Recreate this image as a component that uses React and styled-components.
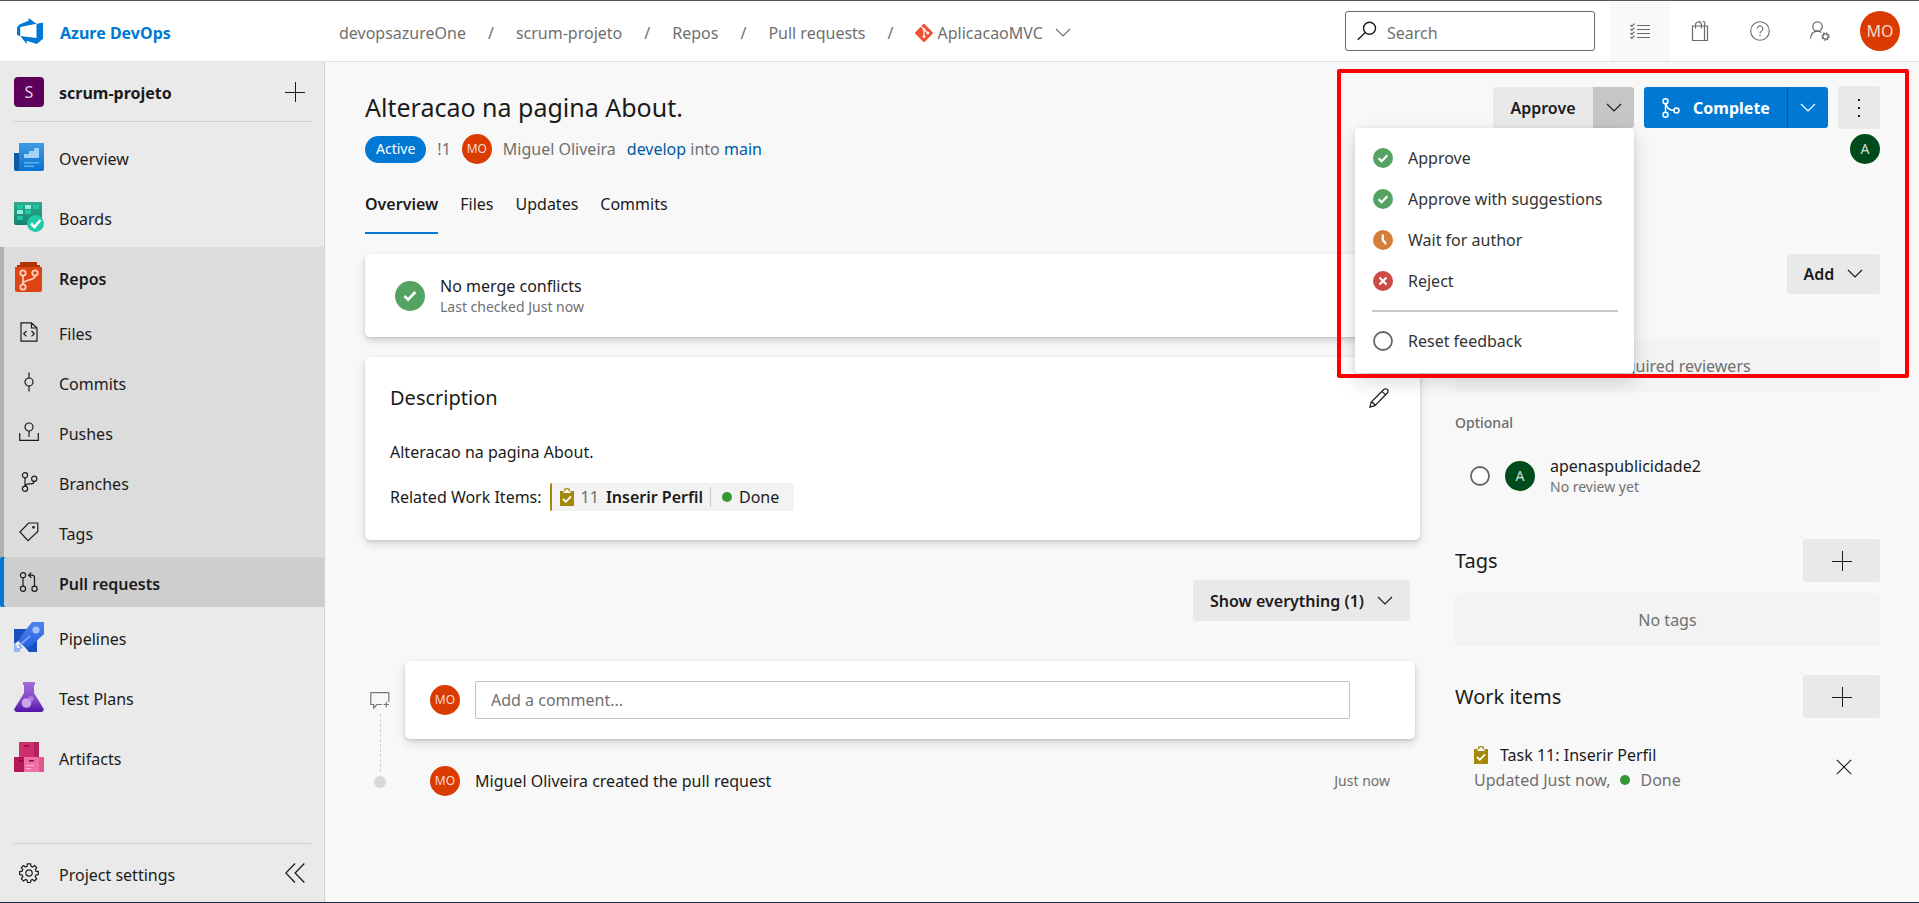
import React from "react";
import styled, { createGlobalStyle, css } from "styled-components";
import { SiGit } from "react-icons/si";

const GlobalStyle = createGlobalStyle`
  *, *::before, *::after { box-sizing: border-box; }
  body { margin: 0; background: #f8f8f8; }
  body, button, input {
    font-family: "Noto Sans", "Open Sans", sans-serif;
    font-size: 16px;
    line-height: 22px;
    color: #1b1b1b;
  }
  button { border: 0; padding: 0; background: none; cursor: pointer; }
  a { color: inherit; text-decoration: none; }
  h1, h2, p, ul { margin: 0; padding: 0; font-weight: 400; }
  ul { list-style: none; }
  svg { display: block; flex: none; }
`;

/* ---------- icons ---------- */

const Line = ({ size = 20, children, width = 1.2, color = "currentColor" }) => (
  <svg width={size} height={size} viewBox="0 0 20 20" fill="none" stroke={color} strokeWidth={width} aria-hidden="true">
    {children}
  </svg>
);

const Chevron = ({ color = "currentColor" }) => (
  <svg width="16" height="16" viewBox="0 0 16 16" fill="none" stroke={color} strokeWidth="1.2" aria-hidden="true">
    <path d="M1 4l7 7 7-7" />
  </svg>
);
const PlusIcon = () => (
  <Line width={1}><path d="M0 10.500h20M10.500 0v20" /></Line>
);
const CloseIcon = () => (
  <svg width="16" height="16" viewBox="0 0 16 16" fill="none" stroke="currentColor" strokeWidth="1.1" aria-hidden="true">
    <path d="M.8.8l14.400 14.400M15.200.8L.8 15.200" />
  </svg>
);
const SearchIcon = () => (
  <Line width={1.4}><circle cx="12.500" cy="7.200" r="6" /><path d="M8.200 11.500L.8 18.800" /></Line>
);
const ListIcon = () => (
  <Line width={1.2}>
    <path d="M7 4.500h13M7 8.500h13M7 12.500h13M7 16.500h13" />
    <path d="M.5 4l1.300 1.300L4.500 2.600M.5 8l1.300 1.300L4.500 6.600M.5 12l1.300 1.300 2.700-2.700M.5 16l1.300 1.300 2.700-2.700" />
  </Line>
);
const BagIcon = () => (
  <Line width={1.2}>
    <path d="M2.500 5h12v14.500h-12zM14.500 5h3v14.500h-3M5.500 7.500V4a3 3 0 0 1 6 0v3.500M9 1.300A3 3 0 0 1 14.500 4v3.500" />
  </Line>
);
const HelpIcon = () => (
  <Line width={1.1}>
    <circle cx="10" cy="10" r="9.300" />
    <path d="M7.200 7.800a2.800 2.800 0 1 1 4.300 2.300c-1 .7-1.500 1.200-1.500 2.400" />
    <path d="M10 13.800v1.500" />
  </Line>
);
const UserGearIcon = () => (
  <Line width={1.2}>
    <circle cx="7.500" cy="5.500" r="4.700" />
    <path d="M.6 17.500c.3-4.500 3-7.300 6.900-7.300 1.500 0 2.800.5 3.800 1.300" />
    <circle cx="15.500" cy="15.500" r="2.600" />
    <circle cx="15.500" cy="15.500" r="3.600" strokeDasharray="1.400 1.430" strokeWidth="1.400" />
  </Line>
);
const FilesIcon = () => (
  <Line><path d="M2 .8h10.500L18 6v13.200H2zM12.500.8V6H18M7.500 9l-2.800 2.700 2.800 2.700M12.500 9l2.800 2.700-2.800 2.700" /></Line>
);
const CommitIcon = () => (
  <Line><circle cx="10" cy="10" r="4" /><path d="M10 .5V6M10 14v5.500" /></Line>
);
const PushIcon = () => (
  <Line><circle cx="10" cy="5" r="4" /><path d="M10 9v6M.7 11v7.300h18.600V11" /></Line>
);
const BranchIcon = () => (
  <Line>
    <circle cx="6" cy="3.200" r="2.600" /><circle cx="6" cy="16.800" r="2.600" /><circle cx="15.200" cy="6.800" r="2.600" />
    <path d="M6 5.800v8.400M6.500 14c.3-1.800 1.300-2.200 3.500-2.200h2c2 0 3-.8 3.200-2.400" />
  </Line>
);
const TagIcon = () => (
  <Line><path d="M9.600 1h9.200v8.500L9 18.600.9 10z" /><circle cx="14.500" cy="5.300" r=".8" fill="currentColor" /></Line>
);
const PullIcon = () => (
  <Line>
    <circle cx="4" cy="3.200" r="2.600" /><circle cx="4" cy="16.800" r="2.600" /><circle cx="15.500" cy="16.800" r="2.600" />
    <path d="M4 5.800v8.400M15.500 14.200V6c0-1.800-.8-2.800-2.500-2.800H9.800M12.300.6L9.600 3.200l2.700 2.600" />
  </Line>
);
const GearIcon = () => (
  <Line>
    <circle cx="10" cy="10" r="3.200" />
    <path d="M8.400.8h3.200l.4 2.500 1.600.7 2.100-1.500 2 2-1.400 2.100.6 1.600 2.400.4v3l-2.400.5-.7 1.500 1.500 2.200-2.200 2.100-2.100-1.400-1.500.6-.5 2.600H8.600l-.5-2.600-1.500-.6-2.200 1.400-2.100-2.100 1.500-2.200-.6-1.500-2.500-.5v-3l2.500-.4.6-1.600-1.500-2.100 2.200-2L6.500 4l1.500-.7z" />
  </Line>
);
const CollapseIcon = () => (
  <Line width={1.300}><path d="M10 .5L.8 10l9.200 9.500M19.300.5L10.100 10l9.200 9.500" /></Line>
);
const PencilIcon = () => (
  <Line>
    <path d="M.9 19.100l1.300-5L14.800 1.500c1-1 2.600-1 3.500 0s1 2.400 0 3.500L5.900 17.700zM13 3.300l3.600 3.600M2.200 14.100c1.800.2 3.300 1.500 3.700 3.600" />
  </Line>
);
const MergeIcon = () => (
  <Line width={1.500}>
    <circle cx="4.500" cy="3.300" r="2.500" /><circle cx="4.500" cy="16.700" r="2.500" /><circle cx="15.500" cy="12.500" r="2.500" />
    <path d="M4.500 5.800v8.400M5 6c.7 4 3.500 6.300 8 6.500" />
  </Line>
);
const MoreIcon = () => (
  <svg width="20" height="20" viewBox="0 0 20 20" fill="#222" aria-hidden="true">
    <rect x="9" y="1" width="2" height="2" /><rect x="9" y="9" width="2" height="2" /><rect x="9" y="17" width="2" height="2" />
  </svg>
);
const CommentIcon = () => (
  <Line color="#777">
    <path d="M12 13.500H7l-3.300 3.500v-3.500H.8V1.600h18v9.500M16.300 10.800v5.500M13.500 13.500H19" />
  </Line>
);
const RingIcon = () => (
  <svg width="20" height="20" viewBox="0 0 20 20" aria-hidden="true">
    <circle cx="10" cy="10" r="9" fill="#fff" stroke="#666" strokeWidth="1.800" />
  </svg>
);
const StatusIcon = ({ kind, size = 20 }) => {
  const fills = { ok: "#55a362", wait: "#d67f3c", no: "#cd4a45" };
  return (
    <svg width={size} height={size} viewBox="0 0 20 20" fill="none" stroke="#fff" strokeWidth="2.200" aria-hidden="true">
      <circle cx="10" cy="10" r="10" fill={fills[kind]} stroke="none" />
      {kind === "ok" && <path d="M5.600 10.200l3 3 5.800-6" />}
      {kind === "wait" && <path d="M9.800 4.500V10l3.200 4" />}
      {kind === "no" && <path d="M6.500 6.500l7 7M13.500 6.500l-7 7" />}
    </svg>
  );
};
const LargeCheckIcon = () => (
  <svg width="30" height="30" viewBox="0 0 30 30" fill="none" aria-hidden="true">
    <circle cx="15" cy="15" r="15" fill="#55a362" />
    <path d="M9.500 15l3.600 3.600 7.200-7.600" stroke="#fff" strokeWidth="2.600" />
  </svg>
);
const TaskIcon = () => (
  <svg width="14" height="18" viewBox="0 0 14 18" aria-hidden="true">
    <path d="M0 3h4V2a3 2 0 0 1 6 0v1h4v15H0z" fill="#a4880a" />
    <path d="M3.500 3.200h2V2.300a1.500 1 0 0 1 3 0v.9h2V5h-7z" fill="#fff" />
    <path d="M3 11l2.800 2.800L11 8.300" fill="none" stroke="#fff" strokeWidth="1.800" />
  </svg>
);
const AzureLogo = () => (
  <svg width="26" height="26" viewBox="0 0 24 24" fill="#0078d4" aria-hidden="true">
    <path d="M0 8.877L2.247 5.910l8.405-3.416V.022l7.370 5.393L2.966 8.338v8.225L0 15.707zm24-4.450v14.651l-5.753 4.900-9.303-3.057v3.056l-5.978-7.416 15.057 1.798V5.415z" />
  </svg>
);

const OverviewArt = () => (
  <svg width="30" height="30" viewBox="0 0 30 30" aria-hidden="true">
    <defs><linearGradient id="ov" x1="0" y1="0" x2="0" y2="1"><stop offset="0" stopColor="#419be2" /><stop offset="1" stopColor="#0573d2" /></linearGradient></defs>
    <path d="M0 11h7v18H2a2 2 0 0 1-2-2z" fill="#0c59a4" />
    <path d="M5 1h24a1 1 0 0 1 1 1v25a2 2 0 0 1-2 2H3c1.500 0 2-1 2-2z" fill="url(#ov)" />
    <path d="M10 12h5V9h5V6h5v10H10z" fill="#a7d2f7" />
    <path d="M10 20h15v1.500H10zM10 23.500h10V25H10z" fill="#5eb0ef" />
  </svg>
);
const BoardsArt = () => (
  <svg width="30" height="30" viewBox="0 0 30 30" aria-hidden="true">
    <defs><linearGradient id="bo" x1="0" y1="0" x2="0" y2="1"><stop offset="0" stopColor="#33a890" /><stop offset="1" stopColor="#16826c" /></linearGradient></defs>
    <path d="M0 0h28v23H2a2 2 0 0 1-2-2z" fill="url(#bo)" />
    <g fill="#19c9a3"><rect x="3" y="3" width="6" height="4" /><rect x="19" y="3" width="6" height="4" /><rect x="11" y="8" width="6" height="4" /><rect x="3" y="14" width="6" height="4" /></g>
    <rect x="11" y="3" width="6" height="4" fill="#8ff0dc" /><rect x="3" y="8" width="6" height="4" fill="#8ff0dc" />
    <circle cx="21.500" cy="21.500" r="8.500" fill="#1fcaa9" />
    <path d="M17 21.500l3.500 3.500 6-7" fill="none" stroke="#fff" strokeWidth="2.600" />
  </svg>
);
const ReposArt = () => (
  <svg width="30" height="30" viewBox="0 0 30 30" aria-hidden="true">
    <path d="M6 0h17v3h3v4H3V3h3z" fill="#b33403" />
    <path d="M1 5h27v23a2 2 0 0 1-2 2H3a2 2 0 0 1-2-2z" fill="#dd4614" />
    <g fill="none" stroke="#ffcdbd" strokeWidth="1.800"><circle cx="9" cy="11" r="2.700" /><circle cx="21" cy="11" r="2.700" /><circle cx="9" cy="25" r="2.700" /><path d="M9 14v8M21 14c0 5-12 3-12 8" /></g>
  </svg>
);
const PipelinesArt = () => (
  <svg width="30" height="30" viewBox="0 0 30 30" aria-hidden="true">
    <defs><linearGradient id="pi" x1="0" y1="0" x2="0" y2="1"><stop offset="0" stopColor="#5082ee" /><stop offset="1" stopColor="#2261e0" /></linearGradient></defs>
    <path d="M0 7h14L6 18l-6 4zM23 15v15h-8l-5-6z" fill="#1a4dbf" />
    <path d="M18 0h12v12L16 25l-4 1-7-6 1-5z" fill="url(#pi)" />
    <circle cx="22" cy="8" r="3.600" fill="#a5bff9" />
    <path d="M16 14l-9 8" stroke="#7ba2f5" strokeWidth="2" />
    <path d="M0 21h2v3l4-2 3 4-3 1v3H0z" fill="#93b4f6" /><path d="M3 22l3 4h-3z" fill="#fff" />
  </svg>
);
const TestArt = () => (
  <svg width="30" height="30" viewBox="0 0 30 30" aria-hidden="true">
    <defs><linearGradient id="te" x1="0" y1="0" x2="0" y2="1"><stop offset="0" stopColor="#a56cda" /><stop offset=".6" stopColor="#7f48c4" /><stop offset="1" stopColor="#5413a8" /></linearGradient></defs>
    <path d="M9 0h12v3h-1v8l9.500 15.500A2.500 2.500 0 0 1 27.500 30h-25A2.500 2.500 0 0 1 .5 26.500L10 11V3H9z" fill="url(#te)" />
    <circle cx="12.500" cy="21" r="4.800" fill="#cba5ee" /><circle cx="17" cy="16.800" r="2.800" fill="#b88ae4" opacity=".8" />
  </svg>
);
const ArtifactsArt = () => (
  <svg width="30" height="30" viewBox="0 0 30 30" aria-hidden="true">
    <path d="M5 0h20v15H5z" fill="#cc2f6d" /><path d="M20 0h5v15h-5z" fill="#b5235d" />
    <path d="M0 15h10v15H1a1 1 0 0 1-1-1z" fill="#b2175a" /><path d="M10 15h20v14a1 1 0 0 1-1 1H10z" fill="#ee6fa4" /><path d="M25 15h5v14a1 1 0 0 1-1 1h-4z" fill="#e4548f" />
    <path d="M10 3h5v1.500h-5zM5 18h4v1.500H5zM15 18h5v1.500h-5z" fill="#8c0c40" /><path d="M12 23h8v1h-8zM12 26h5v1h-5z" fill="#ffb3d1" />
  </svg>
);

/* ---------- shell ---------- */

const Page = styled.div`
  min-height: 100vh;
  display: flex;
  flex-direction: column;
  border-top: 1px solid #555;
  border-bottom: 1px solid #1c2c40;
`;
const Header = styled.header`
  display: flex;
  align-items: center;
  height: 61px;
  background: #fff;
  border-bottom: 1px solid #e2e2e2;
  padding-right: 19px;
`;
const Label = styled.span`
  padding-top: 3px;
`;
const Brand = styled.a`
  display: flex;
  align-items: center;
  gap: 17px;
  width: 339px;
  padding-left: 17px;
  color: #0078d4;
  font-weight: 700;
`;
const Crumbs = styled.nav`
  display: flex;
  align-items: center;
  gap: 22px;
  flex: 1;
  padding-top: 3px;
  color: #707070;
  white-space: nowrap;
`;
const RepoPicker = styled.button`
  display: flex;
  align-items: center;
  gap: 4px;
  color: #707070;
  svg:last-child { margin-left: 8px; }
`;
const SearchBox = styled.label`
  display: flex;
  align-items: center;
  gap: 10px;
  width: 250px;
  height: 40px;
  margin-right: 15px;
  padding: 0 11px;
  border: 1px solid #666;
  border-radius: 3px;
  input {
    width: 100%;
    border: 0;
    padding: 3px 0 0;
    outline: 0;
    background: none;
  }
  input::placeholder { color: #707070; opacity: 1; }
`;
const HeaderButton = styled.button`
  display: flex;
  align-items: center;
  justify-content: center;
  width: 60px;
  height: 60px;
  color: #6a6a6a;
  background: ${(p) => (p.$active ? "#f9f9f9" : "transparent")};
`;
const Avatar = styled.span`
  display: flex;
  align-items: center;
  justify-content: center;
  flex: none;
  width: ${(p) => p.$size || 30}px;
  height: ${(p) => p.$size || 30}px;
  border-radius: 50%;
  background: ${(p) => (p.$green ? "#004b1c" : "#da3b01")};
  color: ${(p) => (p.$green ? "#d0e0d5" : "#f6d9cf")};
  font-size: ${(p) => p.$font || 12}px;
`;
const ProfileButton = styled.button`
  margin-left: 10px;
`;
const Body = styled.div`
  display: flex;
  flex: 1;
`;

/* ---------- sidebar ---------- */

const Sidebar = styled.aside`
  display: flex;
  flex-direction: column;
  flex: none;
  width: 325px;
  background: #eaeaea;
  border-right: 1px solid #d0d0d0;
`;
const ProjectRow = styled.div`
  display: flex;
  align-items: center;
  gap: 15px;
  height: 60px;
  margin: 0 13px 5px;
  padding: 0 6px 0 1px;
  border-bottom: 1px solid #cfcfcf;
  font-weight: 700;
  a { flex: 1; padding-top: 3px; }
`;
const ProjectBadge = styled.span`
  display: grid;
  place-items: center;
  width: 30px;
  height: 30px;
  border-radius: 4px;
  background: #5c005c;
  color: #e6cfe6;
  font-weight: 400;
`;
const NavGroup = styled.ul`
  ${(p) => p.$open && css`
    background: #dcdcdc;
    box-shadow: inset 4px 0 0 #b0b0b0;
  `}
`;
const NavLink = styled.a`
  display: flex;
  align-items: center;
  height: ${(p) => (p.$sub ? 50 : 60)}px;
  font-weight: ${(p) => (p.$strong ? 600 : 400)};
  ${(p) => p.$current && css`
    background: #cecece;
    box-shadow: inset 4px 0 0 #0078d4;
    border-radius: 2px;
  `}
`;
const NavIcon = styled.span`
  display: flex;
  justify-content: center;
  width: 59px;
  padding-right: 1px;
`;
const SidebarFooter = styled.div`
  display: flex;
  align-items: center;
  height: 59px;
  margin: auto 13px 0;
  border-top: 1px solid #cfcfcf;
  padding-right: 6px;
  a {
    display: flex;
    flex: 1;
    align-items: center;
    gap: 20px;
    padding-left: 6px;
  }
`;

/* ---------- main ---------- */

const Main = styled.main`
  position: relative;
  flex: 1;
  min-width: 0;
  padding: 24px 39px 0 40px;
`;
const Top = styled.div`
  display: flex;
  justify-content: space-between;
`;
const TitleBlock = styled.div`
  display: flex;
  flex-direction: column;
  gap: 5px;
`;
const Title = styled.h1`
  font-size: 25px;
  line-height: 43px;
`;
const Meta = styled.div`
  display: flex;
  align-items: center;
  gap: 11px;
  height: 30px;
  color: #707070;
`;
const Pill = styled.span`
  padding: 2px 11px 3px;
  border-radius: 14px;
  background: #0078d4;
  color: #fff;
  font-size: 14px;
`;
const BranchLink = styled.a`
  color: #005a9e;
`;
const Actions = styled.div`
  display: flex;
  flex-direction: column;
  align-items: flex-end;
  gap: 5px;
`;
const ActionRow = styled.div`
  display: flex;
  align-items: center;
  gap: 10px;
`;
const Split = styled.div`
  position: relative;
  display: flex;
  height: 41px;
`;
const SplitMain = styled.button`
  display: flex;
  align-items: center;
  justify-content: center;
  gap: 12px;
  width: ${(p) => (p.$primary ? 143 : 100)}px;
  border-radius: 3px 0 0 3px;
  font-weight: ${(p) => (p.$primary ? 700 : 600)};
  background: ${(p) => (p.$primary ? "#0078d4" : "#e9e9e9")};
  color: ${(p) => (p.$primary ? "#fff" : "inherit")};
`;
const SplitToggle = styled.button`
  display: flex;
  align-items: center;
  justify-content: center;
  width: 41px;
  border-radius: 0 3px 3px 0;
  background: ${(p) => (p.$primary ? "#0078d4" : "#c6c6c6")};
  border-left: ${(p) => (p.$primary ? "1px solid #005a9e" : "0")};
  color: ${(p) => (p.$primary ? "#fff" : "inherit")};
`;
const GreyButton = styled.button`
  display: flex;
  align-items: center;
  justify-content: center;
  gap: 13px;
  width: ${(p) => p.$w}px;
  height: ${(p) => p.$h}px;
  border-radius: 3px;
  background: #e9e9e9;
  font-weight: 600;
  white-space: nowrap;
`;
const Menu = styled.div`
  position: absolute;
  z-index: 2;
  top: 100%;
  right: 0;
  width: 279px;
  padding: 9px 0 12px;
  background: #fff;
  border-radius: 4px;
  box-shadow: 0 8px 20px rgba(0, 0, 0, 0.16), 0 1px 4px rgba(0, 0, 0, 0.1);
`;
const MenuItem = styled.button`
  display: flex;
  align-items: center;
  gap: 15px;
  width: 100%;
  height: 41px;
  padding-left: 18px;
  color: #333;
  white-space: nowrap;
`;
const MenuRule = styled.div`
  height: 2px;
  margin: 9px 16px 8px 17px;
  background: #c8c8c8;
`;
const Highlight = styled.div`
  position: absolute;
  z-index: 3;
  top: 7px;
  right: 10px;
  width: 572px;
  height: 309px;
  border: 4px solid #f00;
  border-radius: 2px;
  pointer-events: none;
`;
const Tabs = styled.nav`
  display: flex;
  gap: 22px;
  margin-top: 12px;
`;
const Tab = styled.a`
  padding: 17px 0;
  line-height: 22px;
  font-weight: ${(p) => (p.$on ? 600 : 400)};
  border-bottom: 2px solid ${(p) => (p.$on ? "#0078d4" : "transparent")};
`;
const Columns = styled.div`
  display: grid;
  grid-template-columns: minmax(0, 1fr) 425px;
  gap: 35px;
  margin-top: 20px;
`;
const Left = styled.div`
  display: flex;
  flex-direction: column;
`;
const cardLook = css`
  background: #fff;
  border-radius: 5px;
  box-shadow: 0 4px 9px rgba(0, 0, 0, 0.14), 0 1px 3px rgba(0, 0, 0, 0.12);
`;
const MergeCard = styled.section`
  ${cardLook}
  display: flex;
  align-items: center;
  gap: 15px;
  height: 83px;
  padding: 0 30px;
`;
const Muted = styled.span`
  color: #707070;
  font-size: ${(p) => (p.$small ? 14 : 16)}px;
  line-height: ${(p) => (p.$small ? 20 : 22)}px;
`;
const Stack = styled.div`
  display: flex;
  flex-direction: column;
`;
const DescriptionCard = styled.section`
  ${cardLook}
  margin-top: 20px;
  height: 183px;
  padding: 26px 25px 0;
`;
const CardHead = styled.div`
  display: flex;
  align-items: center;
  justify-content: space-between;
  height: 30px;
  padding-right: 6px;
`;
const Heading = styled.h2`
  font-size: 20px;
  line-height: 26px;
`;
const DescText = styled.p`
  margin: 28px 0 20px;
`;
const Related = styled.div`
  display: flex;
  align-items: center;
  gap: 8px;
`;
const Chip = styled.a`
  display: flex;
  align-items: center;
  gap: 7px;
  height: 28px;
  padding: 0 15px 0 8px;
  border-left: 2px solid #a4880a;
  border-radius: 2px;
  background: #f3f3f3;
  b { font-weight: 600; }
`;
const ChipState = styled.span`
  display: flex;
  align-items: center;
  gap: 7px;
  height: 20px;
  padding-left: 11px;
  border-left: 1px solid #c8c8c8;
`;
const Dot = styled.i`
  width: 10px;
  height: 10px;
  border-radius: 50%;
  background: #339933;
`;
const FilterRow = styled.div`
  display: flex;
  justify-content: flex-end;
  margin: 40px 10px 40px 0;
`;
const Timeline = styled.div`
  display: grid;
  grid-template-columns: 30px minmax(0, 1fr);
  column-gap: 10px;
  padding-right: 5px;
`;
const Rail = styled.div`
  display: flex;
  flex-direction: column;
  align-items: center;
  padding-top: 30px;
`;
const RailLine = styled.span`
  height: 58px;
  margin: 3px 0 4px;
  border-left: 1px dashed #cfcfcf;
`;
const RailDot = styled.span`
  width: 12px;
  height: 12px;
  border-radius: 50%;
  background: #d9d9d9;
`;
const CommentCard = styled.form`
  ${cardLook}
  display: flex;
  align-items: center;
  gap: 15px;
  height: 78px;
  padding: 0 65px 0 25px;
`;
const CommentInput = styled.input`
  flex: 1;
  height: 38px;
  padding: 0 15px;
  border: 1px solid #c2c2c2;
  border-radius: 2px;
  &::placeholder { color: #707070; opacity: 1; }
`;
const EventRow = styled.div`
  display: flex;
  align-items: center;
  gap: 15px;
  margin-top: 27px;
  padding: 0 25px;
  p { flex: 1; }
`;
const Right = styled.div`
  display: flex;
  flex-direction: column;
`;
const SideHead = styled.div`
  display: flex;
  align-items: center;
  justify-content: ${(p) => (p.$end ? "flex-end" : "space-between")};
`;
const Empty = styled.div`
  display: grid;
  place-items: center;
  height: 53px;
  margin: ${(p) => p.$top}px 0 ${(p) => p.$bottom}px;
  border-radius: 3px;
  background: #f3f3f3;
  color: #707070;
`;
const SubHead = styled.div`
  color: #6a6a6a;
  font-size: 14px;
  font-weight: 500;
  line-height: 20px;
`;
const Reviewer = styled.div`
  display: flex;
  align-items: center;
  gap: 15px;
  height: 50px;
  margin: 18px 0 38px;
  padding-left: 15px;
`;
const WorkItem = styled.div`
  display: flex;
  align-items: center;
  justify-content: space-between;
  margin-top: 24px;
  padding: 0 28px 0 19px;
`;
const WorkLine = styled.div`
  display: flex;
  align-items: center;
  gap: ${(p) => p.$gap}px;
  height: 25px;
  color: ${(p) => (p.$muted ? "#707070" : "inherit")};
`;

const subPages = [
  ["Files", FilesIcon],
  ["Commits", CommitIcon],
  ["Pushes", PushIcon],
  ["Branches", BranchIcon],
  ["Tags", TagIcon],
  ["Pull requests", PullIcon],
];
const votes = [
  ["Approve", "ok"],
  ["Approve with suggestions", "ok"],
  ["Wait for author", "wait"],
  ["Reject", "no"],
];

const NavItem = ({ label, icon: Icon, ...rest }) => (
  <li>
    <NavLink href="#" {...rest}>
      <NavIcon><Icon /></NavIcon>
      <Label>{label}</Label>
    </NavLink>
  </li>
);

export default function App() {
  return (
    <Page>
      <GlobalStyle />
      <Header>
        <Brand href="#"><AzureLogo /><Label>Azure DevOps</Label></Brand>
        <Crumbs aria-label="Breadcrumb">
          <a href="#">devopsazureOne</a><span>/</span>
          <a href="#">scrum-projeto</a><span>/</span>
          <a href="#">Repos</a><span>/</span>
          <a href="#">Pull requests</a><span>/</span>
          <RepoPicker type="button"><SiGit size={18} color="#f05133" />AplicacaoMVC<Chevron /></RepoPicker>
        </Crumbs>
        <SearchBox>
          <SearchIcon />
          <input type="search" placeholder="Search" aria-label="Search" />
        </SearchBox>
        <HeaderButton type="button" $active aria-label="My work"><ListIcon /></HeaderButton>
        <HeaderButton type="button" aria-label="Marketplace"><BagIcon /></HeaderButton>
        <HeaderButton type="button" aria-label="Help"><HelpIcon /></HeaderButton>
        <HeaderButton type="button" aria-label="User settings"><UserGearIcon /></HeaderButton>
        <ProfileButton type="button" aria-label="Profile"><Avatar $size={40} $font={16}>MO</Avatar></ProfileButton>
      </Header>

      <Body>
        <Sidebar>
          <ProjectRow>
            <ProjectBadge>S</ProjectBadge>
            <a href="#">scrum-projeto</a>
            <button type="button" aria-label="New"><PlusIcon /></button>
          </ProjectRow>
          <NavGroup>
            <NavItem label="Overview" icon={OverviewArt} />
            <NavItem label="Boards" icon={BoardsArt} />
          </NavGroup>
          <NavGroup $open>
            <NavItem label="Repos" icon={ReposArt} $strong />
            {subPages.map(([label, icon]) => {
              const on = label === "Pull requests";
              return <NavItem key={label} label={label} icon={icon} $sub $current={on} $strong={on} />;
            })}
          </NavGroup>
          <NavGroup>
            <NavItem label="Pipelines" icon={PipelinesArt} />
            <NavItem label="Test Plans" icon={TestArt} />
            <NavItem label="Artifacts" icon={ArtifactsArt} />
          </NavGroup>
          <SidebarFooter>
            <a href="#"><GearIcon /><Label>Project settings</Label></a>
            <button type="button" aria-label="Collapse"><CollapseIcon /></button>
          </SidebarFooter>
        </Sidebar>

        <Main>
          <Top>
            <TitleBlock>
              <Title>Alteracao na pagina About.</Title>
              <Meta>
                <Pill>Active</Pill>
                <span>!1</span>
                <Avatar>MO</Avatar>
                <span>Miguel Oliveira</span>
                <span><BranchLink href="#">develop</BranchLink> into <BranchLink href="#">main</BranchLink></span>
              </Meta>
            </TitleBlock>
            <Actions>
              <ActionRow>
                <Split>
                  <SplitMain type="button">Approve</SplitMain>
                  <SplitToggle type="button" aria-label="Vote options"><Chevron /></SplitToggle>
                  <Menu role="menu">
                    {votes.map(([label, kind]) => (
                      <MenuItem key={label} type="button" role="menuitem"><StatusIcon kind={kind} />{label}</MenuItem>
                    ))}
                    <MenuRule />
                    <MenuItem type="button" role="menuitem"><RingIcon />Reset feedback</MenuItem>
                  </Menu>
                </Split>
                <Split>
                  <SplitMain type="button" $primary><MergeIcon />Complete</SplitMain>
                  <SplitToggle type="button" $primary aria-label="Complete options"><Chevron /></SplitToggle>
                </Split>
                <GreyButton type="button" $w={42} $h={43} aria-label="More"><MoreIcon /></GreyButton>
              </ActionRow>
              <Avatar $green $font={14}>A</Avatar>
            </Actions>
          </Top>
          <Tabs>
            <Tab href="#" $on>Overview</Tab>
            <Tab href="#">Files</Tab>
            <Tab href="#">Updates</Tab>
            <Tab href="#">Commits</Tab>
          </Tabs>
          <Columns>
            <Left>
              <MergeCard>
                <LargeCheckIcon />
                <Stack>
                  <span>No merge conflicts</span>
                  <Muted $small>Last checked Just now</Muted>
                </Stack>
              </MergeCard>
              <DescriptionCard>
                <CardHead>
                  <Heading>Description</Heading>
                  <button type="button" aria-label="Edit description"><PencilIcon /></button>
                </CardHead>
                <DescText>Alteracao na pagina About.</DescText>
                <Related>
                  Related Work Items:
                  <Chip href="#">
                    <TaskIcon /><Muted>11</Muted><b>Inserir Perfil</b>
                    <ChipState><Dot />Done</ChipState>
                  </Chip>
                </Related>
              </DescriptionCard>
              <FilterRow>
                <GreyButton type="button" $w={217} $h={41}>Show everything (1)<Chevron /></GreyButton>
              </FilterRow>
              <Timeline>
                <Rail><CommentIcon /><RailLine /><RailDot /></Rail>
                <div>
                  <CommentCard>
                    <Avatar>MO</Avatar>
                    <CommentInput type="text" placeholder="Add a comment..." aria-label="Add a comment" />
                  </CommentCard>
                  <EventRow>
                    <Avatar>MO</Avatar>
                    <p>Miguel Oliveira created the pull request</p>
                    <Muted $small>Just now</Muted>
                  </EventRow>
                </div>
              </Timeline>
            </Left>
            <Right>
              <SideHead $end>
                <GreyButton type="button" $w={93} $h={40}>Add<Chevron /></GreyButton>
              </SideHead>
              <Empty $top={45} $bottom={21}>No required reviewers</Empty>
              <SubHead>Optional</SubHead>
              <Reviewer>
                <RingIcon />
                <Avatar $green $font={14}>A</Avatar>
                <Stack>
                  <span>apenaspublicidade2</span>
                  <Muted $small>No review yet</Muted>
                </Stack>
              </Reviewer>
              <SideHead>
                <Heading>Tags</Heading>
                <GreyButton type="button" $w={77} $h={43} aria-label="Add tag"><PlusIcon /></GreyButton>
              </SideHead>
              <Empty $top={11} $bottom={29}>No tags</Empty>
              <SideHead>
                <Heading>Work items</Heading>
                <GreyButton type="button" $w={77} $h={43} aria-label="Add work item"><PlusIcon /></GreyButton>
              </SideHead>
              <WorkItem>
                <div>
                  <WorkLine $gap={12}><TaskIcon /><a href="#">Task 11: Inserir Perfil</a></WorkLine>
                  <WorkLine $gap={10} $muted>Updated Just now, <Dot />Done</WorkLine>
                </div>
                <button type="button" aria-label="Remove work item"><CloseIcon /></button>
              </WorkItem>
            </Right>
          </Columns>
          <Highlight />
        </Main>
      </Body>
    </Page>
  );
}
